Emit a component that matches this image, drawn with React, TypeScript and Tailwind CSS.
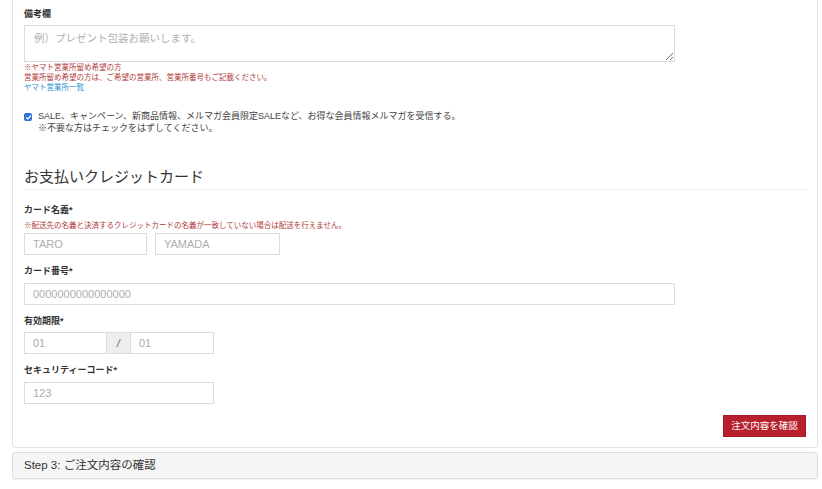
import React from 'react';

const font = "font-['Liberation_Sans','Noto_Sans_CJK_JP',sans-serif]";

const Label: React.FC<{ children: React.ReactNode; className?: string }> = ({ children, className = '' }) => (
  <div className={`text-[9px] leading-[12px] font-bold text-[#333] ${className}`}>{children}</div>
);

const Field: React.FC<{ placeholder: string; className?: string }> = ({ placeholder, className = '' }) => (
  <input
    readOnly
    placeholder={placeholder}
    className={`h-[22px] border border-[#dcdcdc] bg-white px-[8px] text-[11px] text-[#333] placeholder:text-[#adadad] outline-none ${font} ${className}`}
  />
);

const App: React.FC = () => {
  return (
    <div className={`min-h-[489px] bg-white pl-[12px] pr-[4px] ${font}`}>
      {/* Step 2 panel (top cut off) */}
      <div className="border-x border-b border-[#e3e3e3] rounded-b-[4px] pl-[11px] pr-[10px] pt-[8px] pb-[10px]">
        {/* Remarks */}
        <Label>備考欄</Label>
        <textarea
          readOnly
          placeholder="例）プレゼント包装お願いします。"
          className={`mt-[5px] block w-[651px] h-[37px] border border-[#dcdcdc] px-[9px] py-[5px] text-[10.5px] text-[#333] placeholder:text-[#b0b0b0] outline-none ${font}`}
        />
        <div className="mt-[1px] text-[7.5px] leading-[10px] text-[#b03a3a]">
          <div>※ヤマト営業所留め希望の方</div>
          <div>営業所留め希望の方は、ご希望の営業所、営業所番号もご記載ください。</div>
        </div>
        <div className="text-[7.5px] leading-[10px] text-[#2b8fd1]">ヤマト営業所一覧</div>

        {/* Newsletter */}
        <div className="mt-[17px] flex items-start gap-[6px]">
          <span className="mt-[3px] flex h-[8px] w-[8px] shrink-0 items-center justify-center rounded-[2px] bg-[#2f6fd6]">
            <svg viewBox="0 0 10 10" className="h-[7px] w-[7px]" fill="none" stroke="white" strokeWidth={1.8} strokeLinecap="round" strokeLinejoin="round">
              <path d="M2 5.2l2 2 4-4.4" />
            </svg>
          </span>
          <div className="text-[9px] leading-[12px] text-[#444]">
            <div>SALE、キャンペーン、新商品情報、メルマガ会員限定SALEなど、お得な会員情報メルマガを受信する。</div>
            <div>※不要な方はチェックをはずしてください。</div>
          </div>
        </div>

        {/* Credit card */}
        <h2 className="mt-[34px] border-b border-[#eeeeee] pb-[3px] text-[15px] leading-[18px] font-normal text-[#333]">
          お支払いクレジットカード
        </h2>

        <Label className="mt-[14px]">カード名義*</Label>
        <div className="mt-[5px] text-[7.5px] leading-[10px] text-[#b03a3a]">
          ※配送先の名義と決済するクレジットカードの名義が一致していない場合は配送を行えません。
        </div>
        <div className="mt-[2px] flex gap-[8px]">
          <Field placeholder="TARO" className="w-[123px]" />
          <Field placeholder="YAMADA" className="w-[125px]" />
        </div>

        <Label className="mt-[10px]">カード番号*</Label>
        <Field placeholder="0000000000000000" className="mt-[6px] block w-[651px]" />

        <Label className="mt-[10px]">有効期限*</Label>
        <div className="mt-[5px] flex">
          <Field placeholder="01" className="w-[83px]" />
          <span className="flex h-[22px] w-[23px] items-center justify-center border-y border-[#dcdcdc] bg-[#eeeeee] text-[10px] italic text-[#555]">
            /
          </span>
          <Field placeholder="01" className="w-[84px]" />
        </div>

        <Label className="mt-[10px]">セキュリティーコード*</Label>
        <Field placeholder="123" className="mt-[6px] block w-[190px]" />

        <div className="mt-[11px] flex justify-end pr-[1px]">
          <button className="h-[22px] w-[83px] border border-[#a51c28] bg-[#b8202e] text-[9.5px] text-white">
            注文内容を確認
          </button>
        </div>
      </div>

      {/* Step 3 */}
      <div className="mt-[4px] flex h-[27px] items-center rounded-[3px] border border-[#dddddd] bg-[#f5f5f5] pl-[11px] text-[11.5px] text-[#333] shadow-[0_1px_1px_rgba(0,0,0,0.05)]">
        Step 3: ご注文内容の確認
      </div>
    </div>
  );
};

export default App;
